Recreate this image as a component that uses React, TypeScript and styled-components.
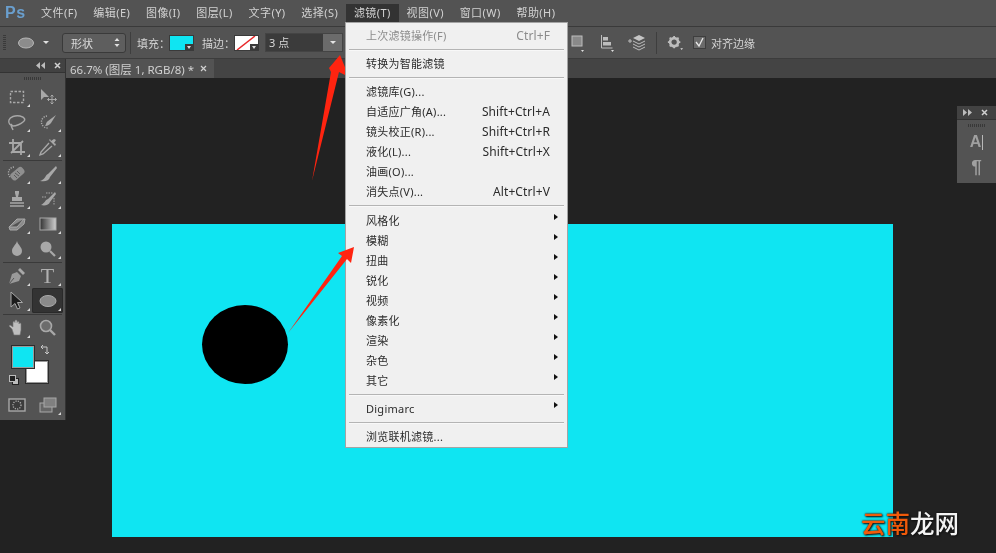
import React from "react";
import styled, { createGlobalStyle } from "styled-components";

const Global = createGlobalStyle`
  html, body { margin: 0; padding: 0; background: #222; }
  body { font-family: "Noto Sans", "Noto Sans CJK SC", sans-serif; font-size: 11px; }
`;

const Page = styled.div`
  position: relative;
  width: 996px;
  height: 553px;
  overflow: hidden;
  display: flex;
  flex-direction: column;
  background: #222222;
  color: #cfcfcf;
  filter: blur(0.35px);
`;

const MenuBar = styled.div`
  display: flex;
  align-items: center;
  height: 26px;
  padding-left: 5px;
  background: #535353;
  border-bottom: 1px solid #3a3a3a;
`;
const Logo = styled.div`
  width: 28.2px;
  font: bold 16px "Liberation Sans", sans-serif;
  color: #6a9fce;
  letter-spacing: 0.5px;
`;
const MenuItem = styled.div<{ $active?: boolean }>`
  height: 18px;
  margin-top: -1px;
  line-height: 18px;
  padding: 0 7.85px;
  font-size: 11px;
  letter-spacing: 0.45px;
  white-space: nowrap;
  color: #d2d2d2;
  background: ${(p) => (p.$active ? "#333333" : "transparent")};
`;

const OptionsBar = styled.div`
  display: flex;
  align-items: center;
  padding-left: 3px;
  background: #535353;
  border-bottom: 1px solid #3c3c3c;
  height: 31px;
`;
const Grip = styled.div`
  width: 3px;
  height: 15px;
  margin-right: 11px;
  background: repeating-linear-gradient(#3a3a3a 0 1px, transparent 1px 2px);
`;
const VSep = styled.div<{ $ml: number; $mr: number }>`
  width: 1px;
  height: 22px;
  margin-left: ${(p) => p.$ml}px;
  margin-right: ${(p) => p.$mr}px;
  background: #3e3e3e;
`;
const ShapeSelect = styled.div`
  box-sizing: border-box;
  width: 64px;
  height: 20px;
  margin-left: 11px;
  display: flex;
  align-items: center;
  justify-content: space-between;
  padding: 0 5px 0 8px;
  background: #5e5e5e;
  border: 1px solid #3a3a3a;
  border-radius: 3px;
  color: #dcdcdc;
`;
const OptLabel = styled.span<{ $w: number; $ml?: number }>`
  width: ${(p) => p.$w}px;
  margin-left: ${(p) => p.$ml ?? 0}px;
  color: #d4d4d4;
  white-space: nowrap;
`;
const Swatch = styled.div<{ $c: string }>`
  position: relative;
  box-sizing: border-box;
  width: 25px;
  height: 16px;
  overflow: hidden;
  background: ${(p) => p.$c};
  border: 1px solid #3a3a3a;
`;
const SwatchCorner = styled.span`
  position: absolute;
  right: 0;
  bottom: 0;
  width: 8px;
  height: 6px;
  background: #3a3a3a;
  &::after {
    content: "";
    position: absolute;
    left: 2px;
    top: 2px;
    border: 2px solid transparent;
    border-top: 3px solid #ddd;
  }
`;
const SizeCombo = styled.div`
  display: flex;
  width: 78px;
  height: 19px;
  margin-left: 6px;
  background: #3b3b3b;
  border: 1px solid #444;
  box-sizing: border-box;
  line-height: 17px;
  color: #d8d8d8;
  padding-left: 3px;
  justify-content: space-between;
`;
const SizeButton = styled.span`
  width: 19px;
  background: #6b6b6b;
  display: flex;
  align-items: center;
  justify-content: center;
  &::after {
    content: "";
    border: 3px solid transparent;
    border-top: 3px solid #e4e4e4;
    margin-top: 3px;
  }
`;
const OptSpacer = styled.div`
  width: 228px;
`;
const OptIcon = styled.span<{ $w: number; $mr: number }>`
  display: flex;
  width: ${(p) => p.$w}px;
  margin-right: ${(p) => p.$mr}px;
`;
const CheckLabel = styled.label`
  display: flex;
  align-items: center;
  gap: 5px;
  color: #d4d4d4;
`;
const CheckBox = styled.span`
  box-sizing: border-box;
  width: 13px;
  height: 13px;
  background: #6a6a6a;
  border: 1px solid #3e3e3e;
  display: flex;
`;

const Body = styled.div`
  flex: 1;
  display: flex;
  min-height: 0;
`;
const ToolBox = styled.div`
  box-sizing: border-box;
  width: 66px;
  height: 361px;
  display: flex;
  flex-direction: column;
  background: #535353;
  border-right: 1px solid #333;
`;
const PanelHeader = styled.div<{ $pad: number }>`
  display: flex;
  align-items: center;
  justify-content: flex-end;
  gap: 9px;
  height: 13px;
  padding-right: ${(p) => p.$pad}px;
  background: #424242;
  color: #c8c8c8;
  border-bottom: 1px solid #333;
`;
const PanelGrip = styled.div`
  width: 18px;
  height: 3px;
  margin: 4px auto 4px;
  background: repeating-linear-gradient(90deg, #383838 0 1px, transparent 1px 2px);
`;
const ToolGrid = styled.div`
  display: grid;
  grid-template-columns: 31px 31px;
  grid-auto-rows: 25px;
  padding-left: 1px;
`;
const ToolCell = styled.div<{ $sel?: boolean }>`
  position: relative;
  display: flex;
  align-items: center;
  justify-content: center;
  border-radius: 2px;
  background: ${(p) => (p.$sel ? "#333333" : "transparent")};
  ${(p) => (p.$sel ? "box-shadow: inset 0 0 0 1px #2a2a2a;" : "")}
`;
const Corner = styled.span`
  position: absolute;
  right: 2px;
  bottom: 2px;
  border-left: 3px solid transparent;
  border-bottom: 3px solid #d8d8d8;
`;
const ToolSep = styled.div`
  height: 1px;
  margin: 1px 3px 0;
  background: #3a3a3a;
`;
const TypeTool = styled.span`
  font: 22px/22px "Liberation Serif", serif;
  color: #b0b0b0;
`;
const ColorBlock = styled.div`
  position: relative;
  height: 52px;
`;
const ColorChip = styled.div<{ $c: string; $x: number; $y: number; $z: number }>`
  position: absolute;
  box-sizing: border-box;
  left: ${(p) => p.$x}px;
  top: ${(p) => p.$y}px;
  width: 24px;
  height: 24px;
  z-index: ${(p) => p.$z};
  background: ${(p) => p.$c};
  border: 1px solid #2c2c2c;
  outline: 1px solid #9a9a9a;
  outline-offset: -2px;
`;
const ChipIcon = styled.span<{ $x: number; $y: number }>`
  position: absolute;
  left: ${(p) => p.$x}px;
  top: ${(p) => p.$y}px;
  display: flex;
`;

const Main = styled.div`
  flex: 1;
  display: flex;
  flex-direction: column;
  min-width: 0;
`;
const TabBar = styled.div`
  display: flex;
  height: 19px;
  background: #444444;
`;
const DocTab = styled.div`
  display: flex;
  align-items: center;
  justify-content: space-between;
  box-sizing: border-box;
  width: 148px;
  padding: 0 7px 0 4px;
  background: #535353;
  color: #d0d0d0;
  font-size: 11.5px;
  white-space: nowrap;
`;
const Workspace = styled.div`
  position: relative;
  flex: 1;
  padding: 146px 0 0 46px;
  background: #222222;
`;
const Canvas = styled.div`
  position: relative;
  width: 781px;
  height: 313px;
  background: #0fe5f2;
`;
const Ellipse = styled.div`
  position: absolute;
  left: 90px;
  top: 81px;
  width: 86px;
  height: 79px;
  border-radius: 50%;
  background: #000;
`;
const FloatPanel = styled.div`
  position: absolute;
  left: 891px;
  top: 28px;
  width: 39px;
  height: 77px;
  background: #535353;
  display: flex;
  flex-direction: column;
`;
const FloatBody = styled.div`
  display: flex;
  flex-direction: column;
  align-items: center;
`;
const CharA = styled.div`
  font: bold 16px/22px "Liberation Sans", sans-serif;
  color: #a0a0a0;
  display: flex;
  align-items: center;
  gap: 1px;
  &::after {
    content: "";
    width: 1px;
    height: 15px;
    background: #b8b8b8;
  }
`;
const Pilcrow = styled.div`
  font: bold 19px/27px "Liberation Sans", sans-serif;
  color: #a0a0a0;
`;

const ArrowLayer = styled.svg`
  position: absolute;
  left: 0;
  top: 0;
  pointer-events: none;
`;

const FilterMenu = styled.div`
  position: absolute;
  left: 345px;
  top: 22px;
  box-sizing: border-box;
  width: 223px;
  height: 426px;
  padding: 2px 3px 0;
  background: #f0f0f0;
  border: 1px solid #a4a4a4;
  color: #2b2b2b;
`;
const Row = styled.div<{ $off?: boolean }>`
  position: relative;
  display: flex;
  justify-content: space-between;
  align-items: center;
  height: 20px;
  padding: 0 14px 0 17px;
  font-size: 11px;
  letter-spacing: 0.25px;
  white-space: nowrap;
  color: ${(p) => (p.$off ? "#8c8c8c" : "#2b2b2b")};
`;
const Shortcut = styled.span<{ $off?: boolean }>`
  font-size: 12px;
  letter-spacing: 0.1px;
  color: ${(p) => (p.$off ? "#8c8c8c" : "#2b2b2b")};
`;
const SubArrow = styled.span`
  position: absolute;
  right: 6px;
  top: 4px;
  border-left: 4px solid #111;
  border-top: 3.5px solid transparent;
  border-bottom: 3.5px solid transparent;
`;
const MenuSep = styled.div<{ $h: number }>`
  display: flex;
  align-items: center;
  height: ${(p) => p.$h}px;
  &::after {
    content: "";
    flex: 1;
    height: 1px;
    background: #b4b4b4;
    box-shadow: 0 1px 0 #f8f8f8;
  }
`;

const Watermark = styled.div`
  position: absolute;
  left: 861px;
  top: 508px;
  font: 500 24.5px/30px "Noto Sans CJK SC", sans-serif;
  color: #f4f4f4;
  text-shadow: 0 0 2px #111, 1px 1px 2px #111;
  white-space: nowrap;
`;
const Orange = styled.span`
  color: #f05a0a;
`;

const g = "#a8a8a8";
const Ic = ({ children, w = 20, h = 20 }: { children: React.ReactNode; w?: number; h?: number }) => (
  <svg width={w} height={h} viewBox={`0 0 ${w} ${h}`} fill="none" stroke={g} strokeWidth={1.4}>
    {children}
  </svg>
);

const icons: Record<string, React.ReactNode> = {
  marquee: <rect x="3.5" y="4.5" width="13" height="11" strokeDasharray="2.5 1.5" />,
  move: (
    <>
      <path d="M3 2v11l3-3h5z" fill={g} stroke="none" />
      <path d="M14 8v9M9.500 12.500h9M12.500 9.500l1.500-1.500 1.500 1.500M12.500 15.500l1.500 1.500 1.500-1.500M11 11l-1.500 1.500 1.500 1.500M17 11l1.500 1.500-1.500 1.500" strokeWidth="1" />
    </>
  ),
  lasso: <path d="M6 14c-3-1-5-3-4-6 1-3 6-5 11-4s6 4 3 6c-2 2-7 4-10 4M5 12c-2 2 0 3 1 6" />,
  quick: (
    <>
      <path d="M9 4a6 6 0 1 0 1 12" strokeDasharray="1.2 1.2" />
      <path d="M18 3l-8 6c-2 1-2 4-3 5 3 0 5-2 6-3z" fill={g} stroke="none" />
    </>
  ),
  crop: <path d="M6 2v13h12M2 6h12v12M4 16L16 4" strokeWidth="1.8" />,
  dropper: (
    <>
      <path d="M11 6l-8 9-1 3 3-1 9-8" />
      <path d="M11 3l6 6 1-2-2-1 2-3-2-1-3 2-1-2z" fill={g} stroke="none" />
    </>
  ),
  heal: (
    <>
      <rect x="3" y="6" width="15" height="8" rx="3" transform="rotate(-40 10 10)" fill="#8f8f8f" stroke="none" />
      <path d="M7 3a6 6 0 0 0-4 10" strokeDasharray="1.2 1.2" />
      <path d="M8 9l4 3M10 7l3 3M7 11l3 3" stroke="#5a5a5a" strokeWidth="1" />
    </>
  ),
  brush: <path d="M18 2l-8 8c-3 1-2 5-8 7 5 1 9 0 10-4l7-9z" fill={g} stroke="none" />,
  stamp: (
    <>
      <path d="M8 2h4v2l-1 4h4v4H5V8h4L8 4z" fill={g} stroke="none" />
      <path d="M3 14h14M3 17h14" strokeWidth="1.5" />
    </>
  ),
  history: (
    <>
      <path d="M17 3l-7 7c-3 1-3 4-7 6 4 1 8 0 9-3l6-8z" fill={g} stroke="none" />
      <path d="M8 4h7M4 8h5M16 9v7" strokeWidth="1" strokeDasharray="1.500 1" />
    </>
  ),
  eraser: <path d="M2 13l8-8h8l-1 5-7 6H3z M3 13h7l7-8" fill="#8a8a8a" strokeWidth="1" />,
  gradient: (
    <>
      <defs>
        <linearGradient id="gr">
          <stop offset="0" stopColor="#333" />
          <stop offset="1" stopColor="#cfcfcf" />
        </linearGradient>
      </defs>
      <rect x="2" y="4" width="16" height="12" fill="url(#gr)" stroke={g} strokeWidth="1" />
    </>
  ),
  drop: <path d="M10 2c1 4 5 6 5 10a5 5 0 0 1-10 0c0-4 4-6 5-10z" fill={g} stroke="none" />,
  dodge: (
    <>
      <circle cx="8" cy="8" r="5.500" fill={g} stroke="none" />
      <path d="M12 12l5 5" strokeWidth="2.2" />
    </>
  ),
  pen: (
    <>
      <path d="M2 18l3-10 5-2 4 4-2 5z" fill="#9a9a9a" stroke="none" />
      <path d="M11 4l2-2 5 5-2 2z" fill={g} stroke="none" />
      <path d="M2 18l5-6" stroke="#555" strokeWidth="1" />
    </>
  ),
  path: <path d="M4 1v15l4-3.500 2.500 5.500 2.500-1-2.500-5.500h5z" fill="#1c1c1c" stroke={g} strokeWidth="1" />,
  ellipse: <ellipse cx="10" cy="10" rx="8" ry="5.500" fill="#8a8a8a" stroke="#aaa" strokeWidth="1" />,
  hand: (
    <path
      d="M5 11L2 8l1-1 3 2V4.500a1 1 0 0 1 2 0V3a1 1 0 0 1 2 0v1.500a1 1 0 0 1 2 0V6a1 1 0 0 1 2 0v6l-1 5H7z"
      fill="#bebebe"
      stroke="#777"
      strokeWidth="0.6"
    />
  ),
  zoom: (
    <>
      <circle cx="8" cy="8" r="5.500" fill="#6c6c6c" stroke={g} strokeWidth="1.6" />
      <path d="M12 12l5 5" strokeWidth="2.4" />
    </>
  ),
  mask: (
    <>
      <rect x="2" y="4" width="16" height="12" stroke="#a8a8a8" fill="#3c3c3c" />
      <circle cx="10" cy="10" r="4" strokeDasharray="1.200 1.200" />
    </>
  ),
  screen: (
    <>
      <rect x="2" y="8" width="12" height="9" fill="#666" strokeWidth="1" />
      <rect x="6" y="3" width="12" height="9" fill="#808080" strokeWidth="1" />
    </>
  ),
};

const Tool = ({ name, sel, corner = true }: { name: string; sel?: boolean; corner?: boolean }) => (
  <ToolCell $sel={sel}>
    <Ic>{icons[name]}</Ic>
    {corner && <Corner />}
  </ToolCell>
);

const menus = ["文件(F)", "编辑(E)", "图像(I)", "图层(L)", "文字(Y)", "选择(S)", "滤镜(T)", "视图(V)", "窗口(W)", "帮助(H)"];
const subs = ["风格化", "模糊", "扭曲", "锐化", "视频", "像素化", "渲染", "杂色", "其它"];
const filters: [string, string][] = [
  ["滤镜库(G)...", ""],
  ["自适应广角(A)...", "Shift+Ctrl+A"],
  ["镜头校正(R)...", "Shift+Ctrl+R"],
  ["液化(L)...", "Shift+Ctrl+X"],
  ["油画(O)...", ""],
  ["消失点(V)...", "Alt+Ctrl+V"],
];

export default function App() {
  return (
    <Page>
      <Global />
      <MenuBar>
        <Logo>Ps</Logo>
        {menus.map((m) => (
          <MenuItem key={m} $active={m === "滤镜(T)"}>
            {m}
          </MenuItem>
        ))}
      </MenuBar>
      <OptionsBar>
        <Grip />
        <OptIcon $w={18} $mr={7}>
          <svg width="18" height="12" viewBox="0 0 18 12">
            <ellipse cx="9" cy="6" rx="7.500" ry="5" fill="#8c8c8c" stroke="#b8b8b8" />
          </svg>
        </OptIcon>
        <OptIcon $w={8} $mr={1}>
          <svg width="8" height="5" viewBox="0 0 8 5">
            <path d="M1 1h6L4 4z" fill="#e0e0e0" />
          </svg>
        </OptIcon>
        <ShapeSelect>
          形状
          <svg width="6" height="11" viewBox="0 0 6 11">
            <path d="M3 1l2.500 3h-5zM3 10L.5 7h5z" fill="#e0e0e0" />
          </svg>
        </ShapeSelect>
        <VSep $ml={4} $mr={6} />
        <OptLabel $w={32}>填充：</OptLabel>
        <Swatch $c="#0fe5f2">
          <SwatchCorner />
        </Swatch>
        <OptLabel $w={32} $ml={8}>
          描边：
        </OptLabel>
        <Swatch $c="#fff">
          <svg width="23" height="14" viewBox="0 0 23 14">
            <path d="M2 14L20 0" stroke="#e8282a" strokeWidth="1.500" />
          </svg>
          <SwatchCorner />
        </Swatch>
        <SizeCombo>
          3 点
          <SizeButton />
        </SizeCombo>
        <OptSpacer />
        <OptIcon $w={14} $mr={15}>
          <svg width="14" height="18" viewBox="0 0 14 18">
            <rect x="1" y="2" width="10" height="10" fill="#8a8a8a" stroke="#bdbdbd" />
            <path d="M10 16h3l-1.500 2z" fill="#ddd" />
          </svg>
        </OptIcon>
        <OptIcon $w={15} $mr={13}>
          <svg width="15" height="18" viewBox="0 0 15 18">
            <path d="M1.500 1v13h11" stroke="#bdbdbd" fill="none" />
            <rect x="3" y="3" width="5" height="3.500" fill="#bdbdbd" />
            <rect x="3" y="8" width="8" height="3.500" fill="#bdbdbd" />
            <path d="M11 16h3l-1.500 2z" fill="#ddd" />
          </svg>
        </OptIcon>
        <OptIcon $w={18} $mr={10}>
          <svg width="18" height="18" viewBox="0 0 18 18">
            <path d="M0 7h4M2 5v4" stroke="#bdbdbd" />
            <path d="M11 1l6 3-6 3-6-3z" fill="#c4c4c4" />
            <path d="M5 7l6 3 6-3M5 10l6 3 6-3M5 13l6 3 6-3" stroke="#bdbdbd" fill="none" />
          </svg>
        </OptIcon>
        <VSep $ml={0} $mr={10} />
        <OptIcon $w={16} $mr={10}>
          <svg width="18" height="18" viewBox="0 0 18 18">
            <circle cx="8" cy="8" r="4.500" fill="none" stroke="#bdbdbd" strokeWidth="3" />
            <path d="M8 1v14M1 8h14M3 3l10 10M13 3L3 13" stroke="#bdbdbd" strokeWidth="2" strokeDasharray="2 10" />
            <path d="M15 15h3l-1.500 2z" fill="#ddd" />
          </svg>
        </OptIcon>
        <CheckLabel>
          <CheckBox>
            <svg width="11" height="11" viewBox="0 0 11 11">
              <path d="M2 5l3 4 4-8" stroke="#e8e8e8" strokeWidth="1.300" fill="none" />
            </svg>
          </CheckBox>
          对齐边缘
        </CheckLabel>
      </OptionsBar>
      <Body>
        <ToolBox>
          <PanelHeader $pad={4}>
            <svg width="9" height="7" viewBox="0 0 9 7">
              <path d="M4 0v7L0 3.500zM9 0v7L5 3.500z" fill="#bcbcbc" />
            </svg>
            <svg width="7" height="7" viewBox="0 0 7 7">
              <path d="M1 1l5 5M6 1L1 6" stroke="#d0d0d0" strokeWidth="1.500" />
            </svg>
          </PanelHeader>
          <PanelGrip />
          <ToolGrid>
            <Tool name="marquee" />
            <Tool name="move" corner={false} />
            <Tool name="lasso" />
            <Tool name="quick" />
            <Tool name="crop" />
            <Tool name="dropper" />
          </ToolGrid>
          <ToolSep />
          <ToolGrid>
            <Tool name="heal" />
            <Tool name="brush" />
            <Tool name="stamp" />
            <Tool name="history" />
            <Tool name="eraser" />
            <Tool name="gradient" />
            <Tool name="drop" />
            <Tool name="dodge" />
          </ToolGrid>
          <ToolSep />
          <ToolGrid>
            <Tool name="pen" />
            <ToolCell>
              <TypeTool>T</TypeTool>
              <Corner />
            </ToolCell>
            <Tool name="path" />
            <Tool name="ellipse" sel />
          </ToolGrid>
          <ToolSep />
          <ToolGrid>
            <Tool name="hand" />
            <Tool name="zoom" corner={false} />
          </ToolGrid>
          <ColorBlock>
            <ColorChip $c="#fff" $x={25} $y={20} $z={1} />
            <ColorChip $c="#0fe5f2" $x={11} $y={5} $z={2} />
            <ChipIcon $x={40} $y={4}>
              <svg width="10" height="12" viewBox="0 0 10 12">
                <path d="M1 3h6v6M1 3l2-2M1 3l2 2M7 10l-2-2M7 10l2-2" stroke="#c8c8c8" fill="none" />
              </svg>
            </ChipIcon>
            <ChipIcon $x={9} $y={35}>
              <svg width="10" height="10" viewBox="0 0 10 10">
                <rect x="3.500" y="3.500" width="6" height="6" fill="#bbb" stroke="#222" />
                <rect x="0.500" y="0.500" width="6" height="6" fill="#222" stroke="#bbb" />
              </svg>
            </ChipIcon>
          </ColorBlock>
          <ToolGrid>
            <Tool name="mask" corner={false} />
            <Tool name="screen" />
          </ToolGrid>
        </ToolBox>
        <Main>
          <TabBar>
            <DocTab>
              66.7% (图层 1, RGB/8) *
              <svg width="7" height="7" viewBox="0 0 7 7">
                <path d="M1 1l5 5M6 1L1 6" stroke="#d0d0d0" strokeWidth="1.200" />
              </svg>
            </DocTab>
          </TabBar>
          <Workspace>
            <Canvas>
              <Ellipse />
            </Canvas>
            <FloatPanel>
              <PanelHeader $pad={8}>
                <svg width="9" height="7" viewBox="0 0 9 7">
                  <path d="M0 0v7l4-3.500zM5 0v7l4-3.500z" fill="#bcbcbc" />
                </svg>
                <svg width="7" height="7" viewBox="0 0 7 7">
                  <path d="M1 1l5 5M6 1L1 6" stroke="#d0d0d0" strokeWidth="1.500" />
                </svg>
              </PanelHeader>
              <PanelGrip />
              <FloatBody>
                <CharA>A</CharA>
                <Pilcrow>¶</Pilcrow>
              </FloatBody>
            </FloatPanel>
          </Workspace>
        </Main>
      </Body>

      <ArrowLayer width="996" height="553" viewBox="0 0 996 553">
        <path d="M312 181L331 72 329 68 340 55 349 77 339 72z" fill="#ff2410" />
      </ArrowLayer>

      <FilterMenu>
        <Row $off>
          上次滤镜操作(F)
          <Shortcut $off>Ctrl+F</Shortcut>
        </Row>
        <MenuSep $h={8} />
        <Row>转换为智能滤镜</Row>
        <MenuSep $h={8} />
        {filters.map(([a, b]) => (
          <Row key={a}>
            {a}
            {b && <Shortcut>{b}</Shortcut>}
          </Row>
        ))}
        <MenuSep $h={9} />
        {subs.map((s) => (
          <Row key={s}>
            {s}
            <SubArrow />
          </Row>
        ))}
        <MenuSep $h={8} />
        <Row>
          Digimarc
          <SubArrow />
        </Row>
        <MenuSep $h={8} />
        <Row>浏览联机滤镜...</Row>
      </FilterMenu>

      <ArrowLayer width="996" height="553" viewBox="0 0 996 553">
        <path d="M288 333L342 256 338 253 354 247 351 263 347 259z" fill="#ff2410" />
      </ArrowLayer>

      <Watermark>
        <Orange>云南</Orange>龙网
      </Watermark>
    </Page>
  );
}
